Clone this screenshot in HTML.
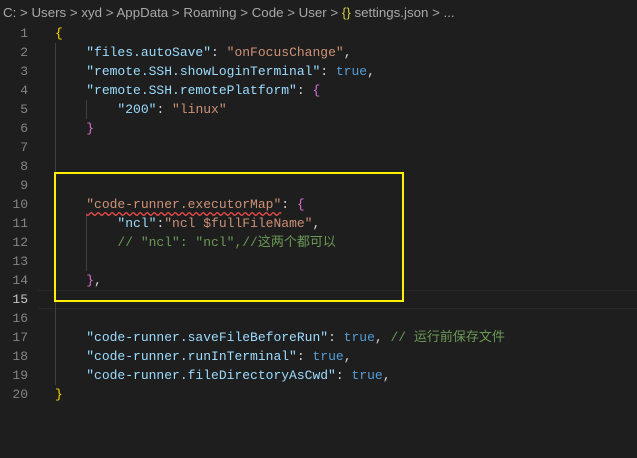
<html><head><style>
body{margin:0;width:637px;height:458px;background:#1e1e1e;overflow:hidden;position:relative;font-family:"Liberation Mono",monospace;}
.bc{position:absolute;left:3px;top:5px;font:13.3px "Liberation Sans","Noto Sans CJK SC",sans-serif;color:#a9a9a9;white-space:pre;}
.ln{position:absolute;left:0;width:28px;text-align:right;color:#858585;font-size:13px;line-height:19px;}
.code{position:absolute;left:55px;font-size:13px;line-height:19px;white-space:pre;color:#d4d4d4;}
.k{color:#9cdcfe}.s{color:#ce9178}.b{color:#569cd6}.y{color:#ffd700}.p{color:#da70d6}.c{color:#6a9955;font-family:"Liberation Mono","Noto Sans CJK SC",monospace}
.g{position:absolute;width:1px;background:#404040}
</style></head><body>
<div class="bc">C: &gt; Users &gt; xyd &gt; AppData &gt; Roaming &gt; Code &gt; User &gt; <span style="color:#cbcb41">{}</span> settings.json &gt; ...</div>
<div style="position:absolute;left:38px;top:290px;width:599px;height:17px;border-top:1px solid #282828;border-bottom:1px solid #282828"></div>
<div class="g" style="left:55px;top:43px;height:342px"></div>
<div class="g" style="left:86px;top:100px;height:19px"></div>
<div class="g" style="left:86px;top:214px;height:57px"></div>
<div class="ln" style="top:24px">1<br>2<br>3<br>4<br>5<br>6<br>7<br>8<br>9<br>10<br>11<br>12<br>13<br>14<br><span style="color:#c6c6c6">15</span><br>16<br>17<br>18<br>19<br>20</div>
<div class="code" style="top:24px"><span class="y">{</span>
    <span class="k">"files.autoSave"</span>: <span class="s">"onFocusChange"</span>,
    <span class="k">"remote.SSH.showLoginTerminal"</span>: <span class="b">true</span>,
    <span class="k">"remote.SSH.remotePlatform"</span>: <span class="p">{</span>
        <span class="k">"200"</span>: <span class="s">"linux"</span>
    <span class="p">}</span>



    <span class="s" style="text-decoration:underline wavy #f14c4c;text-underline-offset:3px">"code-runner.executorMap"</span>: <span class="p">{</span>
        <span class="k">"ncl"</span>:<span class="s">"ncl $fullFileName"</span>,
        <span class="c">// "ncl": "ncl",//这两个都可以</span>

    <span class="p">}</span>,


    <span class="k">"code-runner.saveFileBeforeRun"</span>: <span class="b">true</span>, <span class="c">// 运行前保存文件</span>
    <span class="k">"code-runner.runInTerminal"</span>: <span class="b">true</span>,
    <span class="k">"code-runner.fileDirectoryAsCwd"</span>: <span class="b">true</span>,
<span class="y">}</span></div>
<div style="position:absolute;left:54px;top:172px;width:346px;height:126px;border:2px solid #ffef00"></div>
</body></html>
